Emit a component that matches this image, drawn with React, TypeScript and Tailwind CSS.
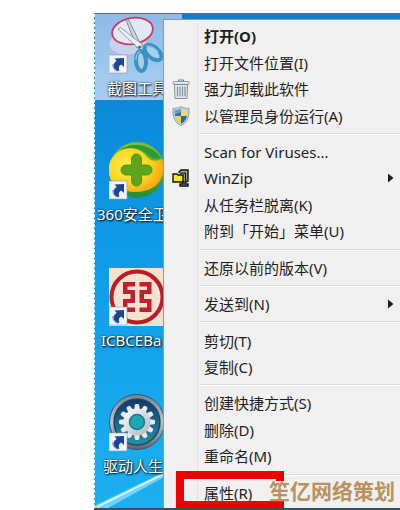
import type { ReactNode } from 'react';

function ShortcutBadge() {
  return (
    <g transform="translate(0 39)">
      <rect width="18" height="18" fill="#f1f4f9" stroke="#8d9bb0" strokeWidth="0.6" />
      <path d="M5.500 3.500l9.500-.5v9l-2.800-2.400c-2.200 1-3 3-1.800 6.400c-4.800-.2-9-5.500-2.700-10.300z" fill="#1d4592" />
      <path d="M4 9c-.6 3.500 1.600 6.500 5 7.200" fill="none" stroke="#5b80bd" strokeWidth="1" />
    </g>
  );
}

function ScissorsIcon() {
  return (
    <svg width="58" height="58" viewBox="0 0 58 58" aria-hidden="true">
      <ellipse cx="19" cy="27" rx="19" ry="12" transform="rotate(-6 19 27)" fill="#c3d4ee" stroke="#d9a6c4" strokeWidth="1" />
      <ellipse cx="23.500" cy="15" rx="20.500" ry="13" transform="rotate(-10 23.500 15)" fill="#e3e9f4" stroke="#cf3a62" strokeWidth="1.800" />
      <path d="M17 4l2.500-.5L32 29l-4 3z" fill="#cdd3da" stroke="#6f7a86" strokeWidth="0.8" />
      <path d="M9 13l2.500-1.500L34 29l-4 4z" fill="#eef1f4" stroke="#7b8692" strokeWidth="0.8" />
      <ellipse cx="32" cy="45" rx="5" ry="10" transform="rotate(-4 32 45)" fill="#a6d0ec" stroke="#3b93c4" strokeWidth="4" />
      <ellipse cx="44" cy="36.500" rx="10" ry="5.500" transform="rotate(40 44 36.500)" fill="#a6d0ec" stroke="#3b93c4" strokeWidth="4" />
      <path d="M27 44c0-4 1-7 4-9M37 30c4-.5 8 1.500 12 6" fill="none" stroke="#8fcbe8" strokeWidth="1.200" />
      <circle cx="30.500" cy="31" r="1.600" fill="#5b6672" />
      <ShortcutBadge />
    </svg>
  );
}

function SafeguardIcon() {
  return (
    <svg width="58" height="58" viewBox="0 0 58 58" aria-hidden="true">
      <defs>
        <radialGradient id="safe-yellow" cx="35%" cy="40%" r="70%">
          <stop offset="0" stopColor="#fdf04a" />
          <stop offset="0.6" stopColor="#fbd21c" />
          <stop offset="1" stopColor="#f4a012" />
        </radialGradient>
        <linearGradient id="safe-green" x1="0" y1="0" x2="0" y2="1">
          <stop offset="0" stopColor="#7cc22c" />
          <stop offset="1" stopColor="#1f8f3a" />
        </linearGradient>
      </defs>
      <circle cx="28" cy="28" r="28" fill="url(#safe-green)" />
      <path d="M3 16C13 2 30 4 37 14c4 5 10 6 16 3c4 12 0 23-8 28C32 53 14 51 5 42C-2 34-2 24 3 16z" fill="url(#safe-yellow)" />
      <path d="M10 9C22-1 42 2 52 16c-6 2-11 0-14-4C30 5 19 4 10 9z" fill="#2f9a35" />
      <path d="M22.500 17a5 5 0 0 1 10 0v6h5.500a5 5 0 0 1 0 10h-5.500v6a5 5 0 0 1-10 0v-6H17a5 5 0 0 1 0-10h5.500z" fill="#5da51f" stroke="#3f8a1c" strokeWidth="0.8" />
      <ShortcutBadge />
    </svg>
  );
}

function BankIcon() {
  return (
    <svg width="58" height="58" viewBox="0 0 58 58" aria-hidden="true">
      <rect width="58" height="58" fill="#f5e1d0" />
      <circle cx="28" cy="29" r="25.500" fill="none" stroke="#b91d2a" strokeWidth="4" />
      <path d="M14 14h12v4.500h-7.500v3.500H26v13h-7.500v4.500H26V44H14V31h7.500v-5H14z" fill="#c01f2b" />
      <path d="M42.500 14h-12v4.500H38v3.500h-7.500v13H38v4.500h-7.500V44h12V31H35v-5h7.500z" fill="#c01f2b" />
      <ShortcutBadge />
    </svg>
  );
}

const teeth = [0, 30, 60, 90, 120, 150, 180, 210, 240, 270, 300, 330];

function DriverIcon() {
  return (
    <svg width="58" height="58" viewBox="0 0 58 58" aria-hidden="true">
      <defs>
        <linearGradient id="ring" x1="0" y1="0" x2="0" y2="1">
          <stop offset="0" stopColor="#71879a" />
          <stop offset="0.5" stopColor="#b9c6cf" />
          <stop offset="1" stopColor="#5b6670" />
        </linearGradient>
        <linearGradient id="dial" x1="0" y1="0" x2="0" y2="1">
          <stop offset="0" stopColor="#12396a" />
          <stop offset="1" stopColor="#2193a8" />
        </linearGradient>
        <linearGradient id="cog" x1="0" y1="0" x2="1" y2="1">
          <stop offset="0" stopColor="#ffffff" />
          <stop offset="1" stopColor="#a9b4ba" />
        </linearGradient>
      </defs>
      <circle cx="28" cy="28" r="27.500" fill="url(#ring)" stroke="#3c5468" strokeWidth="1" />
      <circle cx="28" cy="28" r="23" fill="url(#dial)" stroke="#25455f" strokeWidth="1.500" />
      {teeth.map((deg) => (
        <path key={deg} d="M25.800 11l.8-1h2.800l.8 1l.8 6h-6z" transform={`rotate(${deg} 28 28)`} fill="#e4eaed" />
      ))}
      <circle cx="28" cy="28" r="13.500" fill="url(#cog)" />
      <circle cx="28" cy="28" r="7.500" fill="#16a9b8" stroke="#2a6f86" strokeWidth="1.500" />
      <ShortcutBadge />
    </svg>
  );
}

function TrashIcon() {
  return (
    <svg width="18" height="20" viewBox="0 0 18 20" aria-hidden="true">
      <path d="M6.500 2.500v-1.500h5v1.500" fill="none" stroke="#6d7887" />
      <rect x="1" y="2.500" width="16" height="3" rx="1.200" fill="#dfe4ea" stroke="#7c8796" strokeWidth="0.8" />
      <path d="M2.500 5.500h13l-.5 14h-12z" fill="#e3e7ec" stroke="#6d7887" strokeWidth="0.8" />
      <path d="M5.500 7.500v10M8 7.500v10M10.500 7.500v10M13 7.500v10" stroke="#8390a0" strokeWidth="1.200" />
    </svg>
  );
}

function ShieldIcon() {
  return (
    <svg width="18" height="20" viewBox="0 0 18 20" aria-hidden="true">
      <defs>
        <clipPath id="shield-clip">
          <path d="M9 2.500c2 1.200 4 1.600 6.300 1.500c.4 6-1 11-6.300 14c-5.300-3-6.700-8-6.300-14c2.300.1 4.300-.3 6.300-1.500z" />
        </clipPath>
      </defs>
      <path d="M9 .5c2 1.500 5 2 8 1.800c.5 8-1 14-8 17.400c-7-3.400-8.500-9.400-8-17.400c3 .2 6-.3 8-1.800z" fill="#c3d0dc" stroke="#7f96ab" strokeWidth="0.8" />
      <g clipPath="url(#shield-clip)">
        <rect width="9" height="10" fill="#2f6fb5" />
        <rect x="9" width="9" height="10" fill="#f0d964" />
        <rect y="10" width="9" height="10" fill="#efd350" />
        <rect x="9" y="10" width="9" height="10" fill="#2a68ab" />
        <path d="M1 3l8-2v5l-8 3z" fill="#ffffff" opacity="0.3" />
      </g>
    </svg>
  );
}

function ZipIcon() {
  return (
    <svg width="18" height="18" viewBox="0 0 18 18" aria-hidden="true">
      <path d="M7 4V3l2-2h7v11l-2 1h-1v2h3v2H8v-2h3v-3" fill="#a8a89e" stroke="#111" strokeWidth="1.400" />
      <path d="M8 4h5.500v8" fill="none" stroke="#111" strokeWidth="1.200" />
      <path d="M1 5h4l1 1h5v7H1z" fill="#f4ec1c" stroke="#111" strokeWidth="1.400" />
    </svg>
  );
}

type Shortcut = { name: string; icon: ReactNode; indent: string; selected?: boolean };

const shortcuts: Shortcut[] = [
  { name: '截图工具', icon: <ScissorsIcon />, indent: 'pl-3', selected: true },
  { name: '360安全卫', icon: <SafeguardIcon />, indent: 'pl-0.5' },
  { name: 'ICBCEBa', icon: <BankIcon />, indent: 'pl-1.5' },
  { name: '驱动人生', icon: <DriverIcon />, indent: 'pl-2' }
];

type Item = { label: string; icon?: ReactNode; bold?: boolean; submenu?: boolean; marked?: boolean };

const groups: Item[][] = [
  [
    { label: '打开(O)', bold: true },
    { label: '打开文件位置(I)' },
    { label: '强力卸载此软件', icon: <TrashIcon /> },
    { label: '以管理员身份运行(A)', icon: <ShieldIcon /> }
  ],
  [
    { label: 'Scan for Viruses...' },
    { label: 'WinZip', icon: <ZipIcon />, submenu: true },
    { label: '从任务栏脱离(K)' },
    { label: '附到「开始」菜单(U)' }
  ],
  [{ label: '还原以前的版本(V)' }],
  [{ label: '发送到(N)', submenu: true }],
  [{ label: '剪切(T)' }, { label: '复制(C)' }],
  [{ label: '创建快捷方式(S)' }, { label: '删除(D)' }, { label: '重命名(M)' }],
  [{ label: '属性(R)', marked: true }]
];

function Gutter({ children }: { children?: ReactNode }) {
  return (
    <span className="flex w-[34px] shrink-0 items-center justify-center self-stretch border-r border-[#dfe0e1]">
      {children}
    </span>
  );
}

function Separator() {
  return (
    <li role="separator" className="flex h-[10px] shrink-0 items-center">
      <Gutter />
      <span className="ml-0.5 h-[2px] flex-1 border-t border-[#dcdddd] bg-white" />
    </li>
  );
}

function MenuRow({ item }: { item: Item }) {
  return (
    <li role="none" className="relative flex min-h-[26px] flex-1">
      <button type="button" role="menuitem" className="flex flex-1 items-center text-left">
        <Gutter>{item.icon}</Gutter>
        <span className={`ml-1.5 flex-1 whitespace-nowrap ${item.bold ? 'font-bold' : ''}`}>{item.label}</span>
        {item.submenu && (
          <svg width="6" height="10" viewBox="0 0 6 10" className="mr-1.5" aria-hidden="true">
            <path d="M0 .5l5.500 4.500l-5.500 4.500z" fill="#1c1c1c" />
          </svg>
        )}
      </button>
      {item.marked && (
        <span className="pointer-events-none absolute -top-[9px] left-3 h-[38px] w-[108px] border-8 border-[#ee0000]" />
      )}
    </li>
  );
}

export default function App() {
  return (
    <div className="relative flex min-h-screen bg-white pt-[13px] pl-[94px] font-['Noto_Sans','Noto_Sans_CJK_SC',sans-serif] text-[15px] leading-5 text-[#1e1e1e]">
      <main className="relative flex min-w-0 flex-1 overflow-hidden border-t border-b-2 border-t-[#52718a] border-b-[#35505f] bg-linear-to-b from-[#0b80d2] via-[#0f9ce8] to-[#1cb0f0]">
        {/* light streak of the wallpaper */}
        <svg width="72" height="40" viewBox="0 0 72 40" className="absolute bottom-0 left-0" aria-hidden="true">
          <path d="M0 38L72 3v5L14 40H0z" fill="#8fe0fb" opacity="0.75" />
          <path d="M3 39L72 5" fill="none" stroke="#e6fbff" strokeWidth="1.500" />
        </svg>
        <ul className="relative flex w-[88px] shrink-0 flex-col gap-10 border-l border-dashed border-white">
          {shortcuts.map((s) => (
            <li key={s.name}>
              <button
                type="button"
                className={`flex h-[86px] w-full flex-col items-start gap-1 pt-0.5 ${s.selected ? 'bg-linear-to-b from-[#8dbbe6] to-[#a9cdf0]' : ''}`}
              >
                <span className="ml-3.5">{s.icon}</span>
                <span
                  className={`${s.indent} whitespace-nowrap text-white [text-shadow:1px_1px_2px_#000,0_0_2px_#12304d]`}
                >
                  {s.name}
                </span>
              </button>
            </li>
          ))}
        </ul>
        <ul
          role="menu"
          className="relative -ml-[19px] mt-[5px] flex min-w-0 flex-1 flex-col border-t border-l border-[#8c9aa5] bg-[#f0f0f0] pt-[3px] pb-[2px]"
        >
          {groups.map((group, i) => [
            i > 0 && <Separator key={`sep-${i}`} />,
            ...group.map((item) => <MenuRow key={item.label} item={item} />)
          ])}
        </ul>
      </main>
      <p className="absolute right-[5px] bottom-[9px] bg-[#f0f0f0] text-[21px] leading-5 font-bold whitespace-nowrap text-[#b8935f]">
        笙亿网络策划
      </p>
    </div>
  );
}
